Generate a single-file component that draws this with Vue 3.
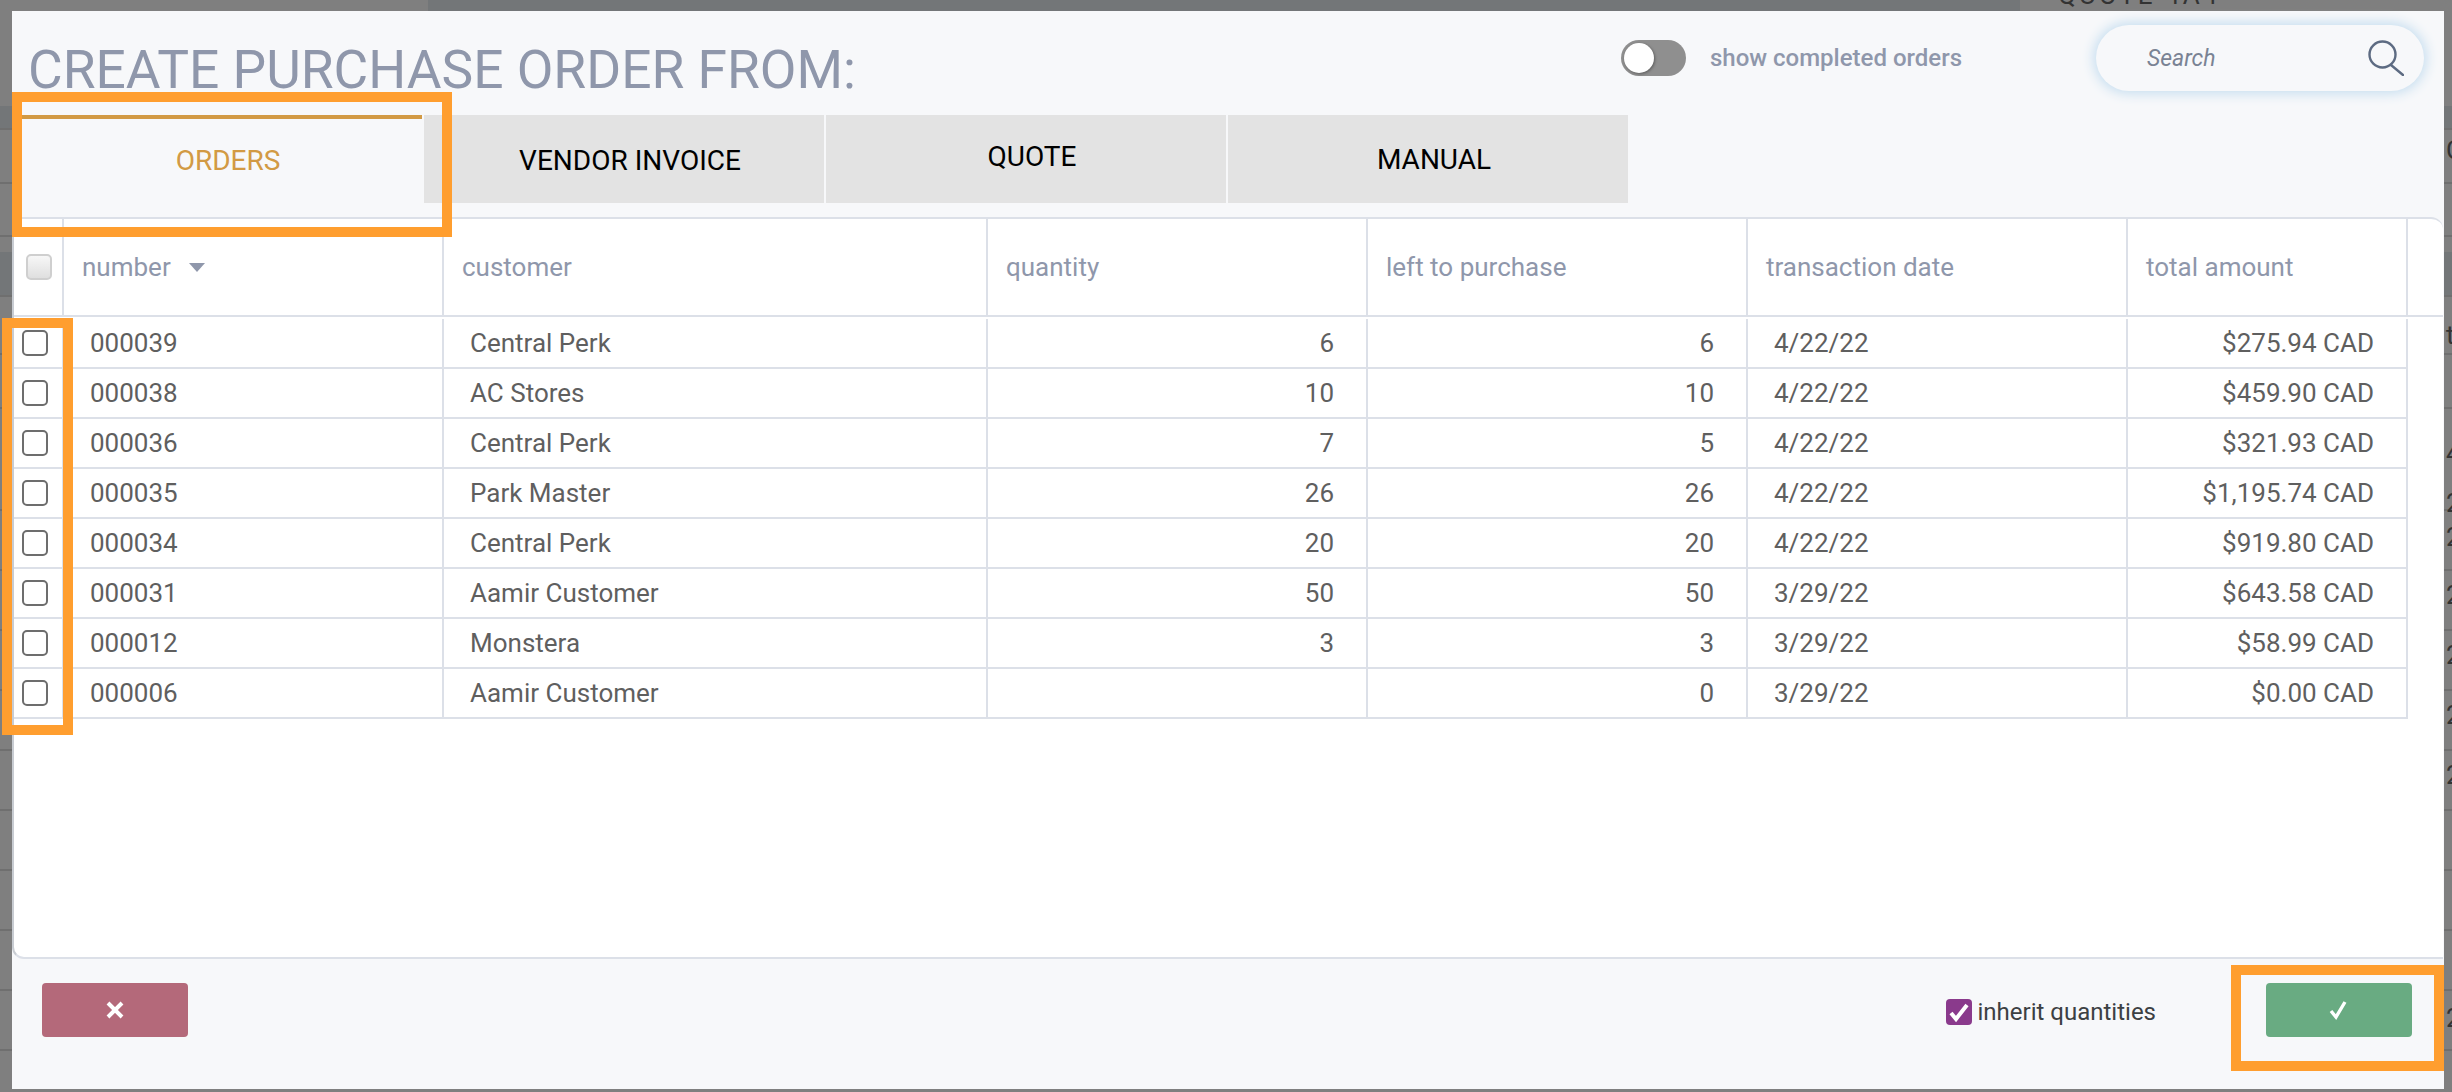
<script setup>
const rows = [
  ['000039', 'Central Perk', '6', '6', '4/22/22', '$275.94 CAD'],
  ['000038', 'AC Stores', '10', '10', '4/22/22', '$459.90 CAD'],
  ['000036', 'Central Perk', '7', '5', '4/22/22', '$321.93 CAD'],
  ['000035', 'Park Master', '26', '26', '4/22/22', '$1,195.74 CAD'],
  ['000034', 'Central Perk', '20', '20', '4/22/22', '$919.80 CAD'],
  ['000031', 'Aamir Customer', '50', '50', '3/29/22', '$643.58 CAD'],
  ['000012', 'Monstera', '3', '3', '3/29/22', '$58.99 CAD'],
  ['000006', 'Aamir Customer', '', '0', '3/29/22', '$0.00 CAD'],
]
const tabs = ['ORDERS', 'VENDOR INVOICE', 'QUOTE', 'MANUAL']
const edgeText = [
  { t: 'C', y: 135 }, { t: 'ti', y: 320 }, { t: '4', y: 438 }, { t: '2', y: 488 },
  { t: '2', y: 522 }, { t: '2', y: 580 }, { t: '2', y: 640 }, { t: '2', y: 700 },
  { t: '2', y: 760 }, { t: '2', y: 1003 },
]
</script>

<template>
  <div class="page">
    <div class="backdrop">
      <span class="top-text">QUOTE 4A4</span>
      <span v-for="e in edgeText" :key="e.y" class="edge-text" :style="{ top: e.y + 'px' }">{{ e.t }}</span>
    </div>
    <section class="dialog">
      <header class="head">
        <h1 class="title">CREATE PURCHASE ORDER FROM:</h1>
        <div class="toggle"><span class="knob"></span></div>
        <span class="toggle-label">show completed orders</span>
        <div class="search">
          <span class="search-text">Search</span>
          <svg class="search-icon" viewBox="0 0 36 36" fill="none" stroke="#5d6b82" stroke-width="2.4" stroke-linecap="round">
            <circle cx="14.5" cy="14.5" r="13" />
            <path d="M23 25l12 10" />
          </svg>
        </div>
      </header>

      <nav class="tabs">
        <div v-for="(t, i) in tabs" :key="t" class="tab" :class="{ active: i === 0 }">{{ t }}</div>
      </nav>

      <div class="table">
        <div class="row hrow">
          <div class="cell check"><span class="head-box"></span></div>
          <div class="cell">number<span class="caret"></span></div>
          <div class="cell">customer</div>
          <div class="cell">quantity</div>
          <div class="cell">left to purchase</div>
          <div class="cell">transaction date</div>
          <div class="cell">total amount</div>
        </div>
        <div v-for="r in rows" :key="r[0]" class="row brow">
          <div class="cell check"><span class="box"></span></div>
          <div class="cell">{{ r[0] }}</div>
          <div class="cell">{{ r[1] }}</div>
          <div class="cell num">{{ r[2] }}</div>
          <div class="cell num">{{ r[3] }}</div>
          <div class="cell">{{ r[4] }}</div>
          <div class="cell num">{{ r[5] }}</div>
        </div>
      </div>

      <footer class="foot">
        <button class="btn cancel">
          <svg viewBox="0 0 18 18" width="18" height="18" fill="none" stroke="#fff" stroke-width="4"><path d="M2 2l14 14M16 2L2 16" /></svg>
        </button>
        <label class="inherit">
          <span class="pbox">
            <svg viewBox="0 0 26 26" width="26" height="26" fill="none" stroke="#fff" stroke-width="4"><path d="M5 14l5 6 11-14" /></svg>
          </span>
          inherit quantities
        </label>
        <button class="btn ok">
          <svg viewBox="0 0 20 20" width="20" height="20" fill="none" stroke="#fff" stroke-width="3.4"><path d="M2 11l5 6L16 2" /></svg>
        </button>
      </footer>
    </section>

    <div class="mark mark-tab"></div>
    <div class="mark mark-checks"></div>
    <div class="mark mark-ok"></div>
  </div>
</template>

<style>
html, body { margin: 0; background: #7f7f7f; }
</style>

<style scoped>
.page {
  position: relative;
  width: 2452px;
  height: 1092px;
  box-sizing: border-box;
  padding: 11px 8px 3px 12px;
  overflow: hidden;
  background: #7f7f7f;
  font-family: Roboto, "Liberation Sans", sans-serif;
}
.backdrop {
  position: absolute;
  inset: 0;
  overflow: hidden;
  background:
    linear-gradient(#737678, #737678) 428px 0 / 1592px 11px no-repeat,
    linear-gradient(#737678, #737678) 0 106px / 100% 22px no-repeat,
    linear-gradient(#737678, #737678) 0 252px / 100% 43px no-repeat,
    repeating-linear-gradient(#7f7f7f 0 58px, #6f6f6f 58px 60px) 0 451px / 100% 641px no-repeat,
    linear-gradient(#6f6f6f, #6f6f6f) 0 128px / 100% 2px no-repeat,
    linear-gradient(#6f6f6f, #6f6f6f) 0 182px / 100% 2px no-repeat,
    linear-gradient(#6f6f6f, #6f6f6f) 0 235px / 100% 2px no-repeat,
    linear-gradient(#6f6f6f, #6f6f6f) 0 295px / 100% 2px no-repeat,
    linear-gradient(#6f6f6f, #6f6f6f) 0 353px / 100% 2px no-repeat,
    linear-gradient(#6f6f6f, #6f6f6f) 0 407px / 100% 2px no-repeat;
}
.top-text {
  position: absolute;
  left: 2058px;
  top: -20px;
  font-size: 26px;
  line-height: 30px;
  letter-spacing: 3px;
  color: #333;
  white-space: nowrap;
}
.edge-text {
  position: absolute;
  left: 2446px;
  font-size: 26px;
  line-height: 30px;
  color: #333;
}
.dialog {
  position: relative;
  height: 100%;
  display: flex;
  flex-direction: column;
  background: #f7f8fa;
}
.head {
  height: 104px;
  flex: none;
  display: flex;
  align-items: flex-start;
  box-sizing: border-box;
  position: relative;
}
.title {
  margin: 27px 0 0 16px;
  font-size: 53.3px;
  line-height: 64px;
  font-weight: 400;
  color: #8f97ab;
  white-space: nowrap;
  flex: 1;
}
.toggle {
  width: 65px;
  height: 36px;
  margin-top: 29px;
  border-radius: 18px;
  background: #8f8f8f;
  position: relative;
  flex: none;
}
.knob {
  position: absolute;
  left: 3px;
  top: 3px;
  width: 30px;
  height: 30px;
  border-radius: 50%;
  background: #fff;
  box-shadow: 1px 1px 3px rgba(0, 0, 0, .35);
}
.toggle-label {
  margin: 0 134px 0 24px;
  padding-top: 33px;
  font-size: 24px;
  line-height: 28px;
  font-weight: 500;
  color: #8f97ab;
  white-space: nowrap;
  flex: none;
}
.search {
  width: 328px;
  height: 66px;
  margin: 14px 20px 0 0;
  border-radius: 33px;
  background: #f7f8fa;
  box-shadow: 0 0 12px 3px #c8dff0;
  display: flex;
  align-items: center;
  justify-content: space-between;
  box-sizing: border-box;
  padding: 0 20px 0 51px;
  flex: none;
}
.search-text {
  font-size: 23px;
  font-style: italic;
  color: #7a8394;
}
.search-icon { width: 36px; height: 36px; }

.tabs {
  display: flex;
  gap: 2px;
  height: 88px;
  padding: 0 0 14px 10px;
  flex: none;
}
.tab {
  width: 400px;
  height: 88px;
  box-sizing: border-box;
  padding-left: 12px;
  background: #e3e3e3;
  color: #000;
  font-size: 28px;
  display: flex;
  align-items: center;
  justify-content: center;
}
.tab:nth-child(1) { padding-bottom: 2px; }
.tab:nth-child(2) { padding-top: 2px; }
.tab:nth-child(3) { padding-bottom: 6px; }
.tab.active {
  background: transparent;
  color: #d29a44;
  border-top: 4px solid #d29a44;
}

.table {
  flex: 1;
  background: #fff;
  border-radius: 0 12px 0 12px;
  margin-right: 1px;
  border-top: 2px solid #dce0e8;
  border-bottom: 2px solid #dce0e8;
  border-left: 2px solid #c8ccd2;
  min-height: 0;
}
.row {
  display: grid;
  grid-template-columns: 50px 380px 544px 380px 380px 380px 280px;
  font-size: 26px;
}
.cell {
  display: flex;
  align-items: center;
  box-sizing: border-box;
  border-right: 2px solid #dce0e8;
  padding-left: 26px;
  white-space: nowrap;
}
.hrow {
  height: 96px;
  border-bottom: 2px solid #dce0e8;
  margin-bottom: 1px;
  color: #8f97ab;
}
.hrow .cell { padding-left: 18px; }
.brow {
  height: 50px;
  color: #5f5f5f;
  width: 2394px;
  border-bottom: 2px solid #dce0e8;
  box-sizing: border-box;
}
.hrow + .brow { margin-top: 2px; }
.cell.check { padding-left: 8px; }
.cell.num { justify-content: flex-end; padding: 0 32px 0 0; }
.caret {
  margin: 0 0 0 18px;
  border-left: 8px solid transparent;
  border-right: 8px solid transparent;
  border-top: 9px solid #8f97ab;
}
.hrow .cell.check { padding-left: 12px; }
.head-box {
  width: 26px;
  height: 26px;
  box-sizing: border-box;
  border: 2px solid #cfcfcf;
  border-radius: 5px;
  background: linear-gradient(#f7f7f7, #dfdfdf);
}
.box {
  width: 26px;
  height: 26px;
  box-sizing: border-box;
  border: 2px solid #6d6d6d;
  border-radius: 5px;
  background: #fff;
}

.foot {
  height: 130px;
  flex: none;
  display: flex;
  align-items: center;
  box-sizing: border-box;
  padding: 0 32px 28px 30px;
}
.btn {
  width: 146px;
  height: 54px;
  border: 0;
  padding: 0;
  border-radius: 4px;
  display: flex;
  align-items: center;
  justify-content: center;
}
.cancel { background: #b4697a; }
.ok { background: #69ab82; }
.inherit {
  margin-left: auto;
  margin-right: 110px;
  display: flex;
  align-items: center;
  gap: 6px;
  font-size: 24px;
  line-height: 26px;
  padding-top: 3px;
  color: #3c4043;
}
.pbox {
  width: 26px;
  height: 26px;
  border-radius: 4px;
  background: #8a3a8c;
  display: block;
}
.pbox svg { display: block; }

.mark {
  position: absolute;
  border: 10px solid #ff9e2f;
  box-sizing: border-box;
}
.mark-tab { left: 12px; top: 92px; width: 440px; height: 145px; }
.mark-checks { left: 2px; top: 318px; width: 71px; height: 417px; }
.mark-ok { left: 2231px; top: 965px; width: 213px; height: 106px; }
</style>
